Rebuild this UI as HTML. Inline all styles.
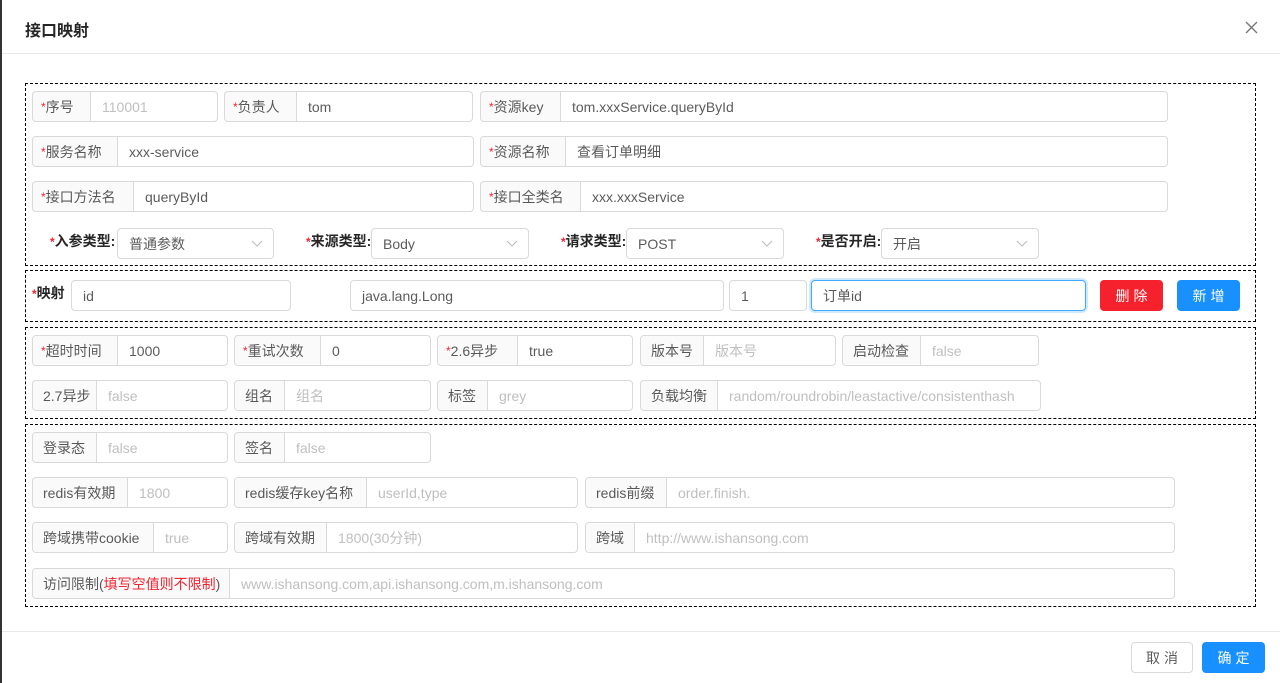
<!DOCTYPE html>
<html><head><meta charset="utf-8"><style>
*{box-sizing:border-box;margin:0;padding:0}
body{width:1280px;height:683px;background:#fff;font-family:"Liberation Sans","Noto Sans CJK SC",sans-serif;font-size:14px;color:rgba(0,0,0,.65);position:relative;overflow:hidden}
.a{position:absolute}
.g{position:absolute;height:31px;border:1px solid #d9d9d9;border-radius:4px;display:flex;background:#fff}
.g .ad{background:#fafafa;border-right:1px solid #d9d9d9;display:flex;align-items:center;padding-left:10px;white-space:nowrap;border-radius:4px 0 0 4px;color:rgba(0,0,0,.65)}
.g .v{display:flex;align-items:center;padding-left:11px;white-space:nowrap;overflow:hidden}
.p{color:#bfbfbf}
.r{color:#f5222d;font-size:12px;font-family:"Liberation Sans",sans-serif}
.box{position:absolute;border:1px dashed #000}
.sel{position:absolute;height:31px;border:1px solid #d9d9d9;border-radius:4px;display:flex;align-items:center;padding-left:11px}
.sel svg{position:absolute;right:10px;top:10px}
.lb{position:absolute;color:rgba(0,0,0,.85);font-weight:bold}
.btn{position:absolute;height:31px;border-radius:4px;display:flex;align-items:center;justify-content:center;letter-spacing:4px;padding-left:4px}
</style></head><body>
<div class="a" style="left:0;top:0;width:2px;height:683px;background:#333"></div>
<div class="a" style="left:25px;top:17px;font-size:16px;font-weight:bold;color:rgba(0,0,0,.85)">接口映射</div>
<svg class="a" style="left:1245px;top:21px" width="13" height="13" viewBox="0 0 13 13"><path d="M1 1L12 12M12 1L1 12" stroke="#777" stroke-width="1.4"/></svg>
<div class="a" style="left:2px;top:53px;width:1278px;height:1px;background:#e8e8e8"></div>

<div class="box" style="left:25px;top:83px;width:1231px;height:183px"></div>
<div class="g" style="left:32px;top:91px;width:186px"><span class="ad" style="width:58px;padding-left:8px"><span class="r">*</span>序号</span><span class="v p">110001</span></div>
<div class="g" style="left:224px;top:91px;width:249px"><span class="ad" style="width:72px;padding-left:8px"><span class="r">*</span>负责人</span><span class="v">tom</span></div>
<div class="g" style="left:480px;top:91px;width:688px"><span class="ad" style="width:80px;padding-left:8px"><span class="r">*</span>资源key</span><span class="v">tom.xxxService.queryById</span></div>
<div class="g" style="left:32px;top:136px;width:442px"><span class="ad" style="width:85px;padding-left:8px"><span class="r">*</span>服务名称</span><span class="v">xxx-service</span></div>
<div class="g" style="left:480px;top:136px;width:688px"><span class="ad" style="width:85px;padding-left:8px"><span class="r">*</span>资源名称</span><span class="v">查看订单明细</span></div>
<div class="g" style="left:32px;top:181px;width:442px"><span class="ad" style="width:101px;padding-left:8px"><span class="r">*</span>接口方法名</span><span class="v">queryById</span></div>
<div class="g" style="left:480px;top:181px;width:688px"><span class="ad" style="width:100px;padding-left:8px"><span class="r">*</span>接口全类名</span><span class="v">xxx.xxxService</span></div>

<div class="lb" style="left:50px;top:231px"><span class="r">*</span>入参类型:</div>
<div class="sel" style="left:117px;top:228px;width:157px">普通参数<svg width="12" height="10"><path d="M1 2l5 5 5-5" stroke="#bbb" fill="none"/></svg></div>
<div class="lb" style="left:306px;top:231px"><span class="r">*</span>来源类型:</div>
<div class="sel" style="left:371px;top:228px;width:158px">Body<svg width="12" height="10"><path d="M1 2l5 5 5-5" stroke="#bbb" fill="none"/></svg></div>
<div class="lb" style="left:561px;top:231px"><span class="r">*</span>请求类型:</div>
<div class="sel" style="left:626px;top:228px;width:158px">POST<svg width="12" height="10"><path d="M1 2l5 5 5-5" stroke="#bbb" fill="none"/></svg></div>
<div class="lb" style="left:816px;top:231px"><span class="r">*</span>是否开启:</div>
<div class="sel" style="left:881px;top:228px;width:158px">开启<svg width="12" height="10"><path d="M1 2l5 5 5-5" stroke="#bbb" fill="none"/></svg></div>

<div class="box" style="left:25px;top:270px;width:1231px;height:52px"></div>
<div class="lb" style="left:32px;top:283px"><span class="r">*</span>映射</div>
<div class="g" style="left:71px;top:280px;width:220px"><span class="v">id</span></div>
<div class="g" style="left:350px;top:280px;width:374px"><span class="v">java.lang.Long</span></div>
<div class="g" style="left:729px;top:280px;width:78px"><span class="v">1</span></div>
<div class="g" style="left:811px;top:280px;width:275px;border-color:#40a9ff;box-shadow:0 0 0 2px rgba(24,144,255,.2)"><span class="v">订单id</span></div>
<div class="btn" style="left:1100px;top:280px;width:63px;background:#f5222d;color:#fff">删除</div>
<div class="btn" style="left:1177px;top:280px;width:63px;background:#1890ff;color:#fff">新增</div>

<div class="box" style="left:25px;top:327px;width:1231px;height:92px"></div>
<div class="g" style="left:32px;top:335px;width:196px"><span class="ad" style="width:85px;padding-left:8px"><span class="r">*</span>超时时间</span><span class="v">1000</span></div>
<div class="g" style="left:234px;top:335px;width:197px"><span class="ad" style="width:86px;padding-left:8px"><span class="r">*</span>重试次数</span><span class="v">0</span></div>
<div class="g" style="left:437px;top:335px;width:196px"><span class="ad" style="width:80px;padding-left:8px"><span class="r">*</span>2.6异步</span><span class="v">true</span></div>
<div class="g" style="left:640px;top:335px;width:196px"><span class="ad" style="width:63px">版本号</span><span class="v p">版本号</span></div>
<div class="g" style="left:842px;top:335px;width:197px"><span class="ad" style="width:78px">启动检查</span><span class="v p">false</span></div>
<div class="g" style="left:32px;top:380px;width:196px"><span class="ad" style="width:64px">2.7异步</span><span class="v p">false</span></div>
<div class="g" style="left:234px;top:380px;width:197px"><span class="ad" style="width:50px">组名</span><span class="v p">组名</span></div>
<div class="g" style="left:437px;top:380px;width:196px"><span class="ad" style="width:50px">标签</span><span class="v p">grey</span></div>
<div class="g" style="left:640px;top:380px;width:401px"><span class="ad" style="width:77px">负载均衡</span><span class="v p">random/roundrobin/leastactive/consistenthash</span></div>

<div class="box" style="left:25px;top:424px;width:1231px;height:183px"></div>
<div class="g" style="left:32px;top:432px;width:196px"><span class="ad" style="width:64px">登录态</span><span class="v p">false</span></div>
<div class="g" style="left:234px;top:432px;width:197px"><span class="ad" style="width:50px">签名</span><span class="v p">false</span></div>
<div class="g" style="left:32px;top:477px;width:196px"><span class="ad" style="width:95px">redis有效期</span><span class="v p">1800</span></div>
<div class="g" style="left:234px;top:477px;width:344px"><span class="ad" style="width:132px">redis缓存key名称</span><span class="v p">userId,type</span></div>
<div class="g" style="left:585px;top:477px;width:590px"><span class="ad" style="width:81px">redis前缀</span><span class="v p">order.finish.</span></div>
<div class="g" style="left:32px;top:522px;width:196px"><span class="ad" style="width:121px">跨域携带cookie</span><span class="v p">true</span></div>
<div class="g" style="left:234px;top:522px;width:344px"><span class="ad" style="width:92px">跨域有效期</span><span class="v p">1800(30分钟)</span></div>
<div class="g" style="left:585px;top:522px;width:590px"><span class="ad" style="width:49px">跨域</span><span class="v p">http://www.ishansong.com</span></div>
<div class="g" style="left:32px;top:568px;width:1143px"><span class="ad" style="width:197px">访问限制(<span style="color:#f5222d">填写空值则不限制</span>)</span><span class="v p">www.ishansong.com,api.ishansong.com,m.ishansong.com</span></div>

<div class="a" style="left:2px;top:631px;width:1278px;height:1px;background:#e8e8e8"></div>
<div class="btn" style="left:1131px;top:642px;width:62px;border:1px solid #d9d9d9;color:rgba(0,0,0,.65)">取消</div>
<div class="btn" style="left:1202px;top:642px;width:63px;background:#1890ff;color:#fff">确定</div>
</body></html>
